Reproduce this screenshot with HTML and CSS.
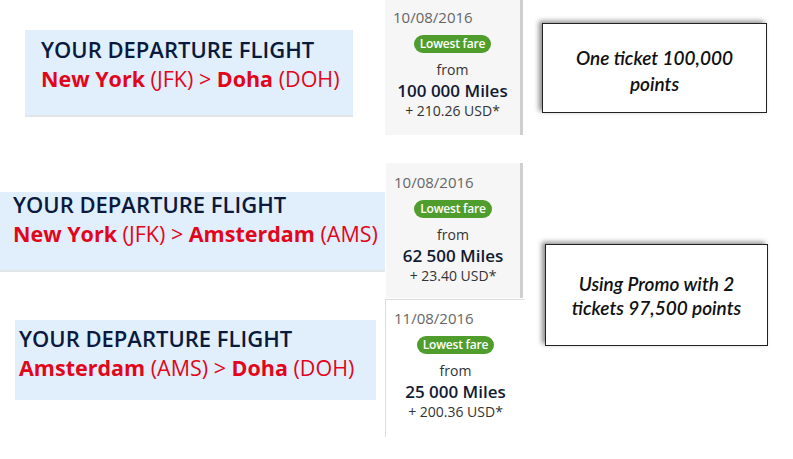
FILE: index.html
```html
<!DOCTYPE html>
<html lang="en">

<head>
    <meta charset="UTF-8">
    <meta name="viewport" content="width=device-width, initial-scale=1.0">
    <title>Departure flights - miles comparison</title>
    <link rel="stylesheet" href="styles.css">
</head>

<body>
    <div class="board">

        <!-- First route: direct flight -->
        <div class="route route-one">
            <div class="route-title">YOUR DEPARTURE FLIGHT</div>
            <div class="route-path"><b>New York</b> (JFK) &gt; <b>Doha</b> (DOH)</div>
        </div>

        <div class="fare fare-one">
            <div class="fare-date">10/08/2016</div>
            <span class="fare-badge">Lowest fare</span>
            <div class="fare-from">from</div>
            <div class="fare-miles">100 000 Miles</div>
            <div class="fare-tax">+ 210.26 USD*</div>
        </div>

        <div class="note note-one">
            <p>One ticket 100,000<br>points</p>
        </div>

        <!-- Second option: two tickets -->
        <div class="route route-two">
            <div class="route-title">YOUR DEPARTURE FLIGHT</div>
            <div class="route-path"><b>New York</b> (JFK) &gt; <b>Amsterdam</b> (AMS)</div>
        </div>

        <div class="fare fare-two">
            <div class="fare-date">10/08/2016</div>
            <span class="fare-badge">Lowest fare</span>
            <div class="fare-from">from</div>
            <div class="fare-miles">62 500 Miles</div>
            <div class="fare-tax">+ 23.40 USD*</div>
        </div>

        <div class="note note-two">
            <p>Using Promo with 2<br>tickets 97,500 points</p>
        </div>

        <div class="route route-three">
            <div class="route-title">YOUR DEPARTURE FLIGHT</div>
            <div class="route-path"><b>Amsterdam</b> (AMS) &gt; <b>Doha</b> (DOH)</div>
        </div>

        <div class="fare fare-three">
            <div class="fare-date">11/08/2016</div>
            <span class="fare-badge">Lowest fare</span>
            <div class="fare-from">from</div>
            <div class="fare-miles">25 000 Miles</div>
            <div class="fare-tax">+ 200.36 USD*</div>
        </div>

    </div>
</body>

</html>
```

FILE: styles.css
```css
body {
    margin: 0;
    padding: 0;
    background-color: #fff;
    font-family: "Open Sans", "Noto Sans", sans-serif;
}

/* the page is a collage of cropped screenshots, so each piece keeps its spot */
.board {
    position: relative;
    width: 793px;
    height: 459px;
    overflow: hidden;
}

.route {
    position: absolute;
    box-sizing: border-box;
    background-color: #e0effb; /* light blue header */
    white-space: nowrap;
}

.route-title {
    font-size: 22px;
    font-weight: 600;
    line-height: 30px;
    color: #0b1a3c;
}

.route-path {
    font-size: 21.5px;
    line-height: 30px;
    color: #e3061b;
}

.route-path b {
    font-weight: 700;
}

.route-one {
    left: 25px;
    top: 30px;
    width: 328px;
    height: 87px;
    padding: 4px 0 0 16px;
    border-bottom: 2px solid #e3e6e9;
}

.route-two {
    left: 0;
    top: 192px;
    width: 385px;
    height: 80px;
    padding: 0 0 0 13px;
    border-bottom: 2px solid #e3e6e9;
}

.route-two .route-title {
    margin-top: -3px;
}

.route-three {
    left: 15px;
    top: 320px;
    width: 361px;
    height: 80px;
    padding: 3px 0 0 4px;
}

/* fare cards */
.fare {
    position: absolute;
    box-sizing: border-box;
    padding: 9px 0 0 8px;
    text-align: center;
    background-color: #f6f6f6;
    border-right: 3px solid #cfcfcf;
    color: #333;
}

.fare-date {
    text-align: left;
    font-size: 15px;
    line-height: 20px;
    color: #666;
}

.fare-badge {
    display: inline-block;
    margin: 8px 0 0 -8px;
    padding: 0 6px;
    border-radius: 9px;
    background-color: #4f9d2d;
    color: #fff;
    font-size: 12px;
    font-weight: 600;
    line-height: 18px;
    letter-spacing: -0.2px;
}

.fare-from {
    margin: 8px 0 0 -8px;
    font-size: 14px;
    line-height: 18px;
}

.fare-miles {
    margin: 2px 0 0 -8px;
    font-size: 17px;
    font-weight: 600;
    line-height: 20px;
    color: #111a33;
}

.fare-tax {
    margin: 1px 0 0 -8px;
    font-size: 14px;
    line-height: 18px;
}

.fare-one {
    left: 385px;
    top: -2px;
    width: 138px;
    height: 137px;
}

.fare-two {
    left: 386px;
    top: 163px;
    width: 137px;
    height: 135px;
}

.fare-three {
    left: 385px;
    top: 299px;
    width: 140px;
    height: 138px;
    background-color: #fff;
    border-right: none;
    border-left: 1px solid #dcdcdc;
    border-top: 1px solid #dcdcdc;
    padding-top: 8px;
}

/* comment boxes */
.note {
    position: absolute;
    box-sizing: border-box;
    display: flex;
    align-items: center;
    justify-content: center;
    border: 1px solid #222;
    background-color: #fff;
    box-shadow: -3px -2px 5px rgba(0, 0, 0, 0.45);
}

.note p {
    margin: 0;
    text-align: center;
    font-family: "Lato", "DejaVu Sans", sans-serif;
    font-style: italic;
    font-weight: 600;
    font-size: 19px;
    color: #111;
}

.note-one {
    left: 542px;
    top: 23px;
    width: 225px;
    height: 90px;
}

.note-one p {
    line-height: 26px;
    margin-top: 6px;
}

.note-two {
    left: 545px;
    top: 244px;
    width: 223px;
    height: 102px;
}

.note-two p {
    line-height: 24px;
    margin-top: 2px;
}
```
